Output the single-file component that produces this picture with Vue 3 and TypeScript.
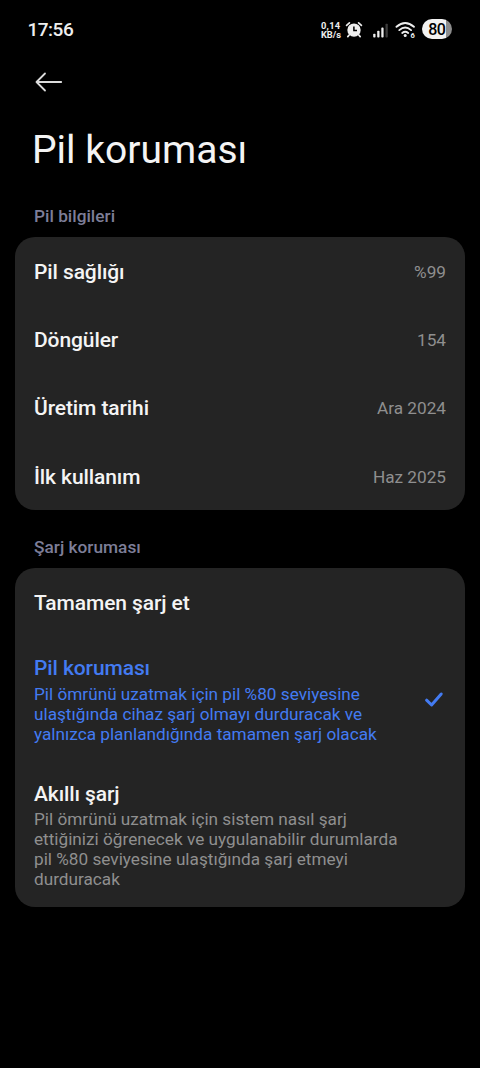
<script setup lang="ts">
interface InfoRow { label: string; value: string }
interface ChargeOption { title: string; lines: string[]; selected: boolean }

const info: InfoRow[] = [
  { label: 'Pil sağlığı', value: '%99' },
  { label: 'Döngüler', value: '154' },
  { label: 'Üretim tarihi', value: 'Ara 2024' },
  { label: 'İlk kullanım', value: 'Haz 2025' },
]

const options: ChargeOption[] = [
  { title: 'Tamamen şarj et', lines: [], selected: false },
  {
    title: 'Pil koruması',
    lines: [
      'Pil ömrünü uzatmak için pil %80 seviyesine',
      'ulaştığında cihaz şarj olmayı durduracak ve',
      'yalnızca planlandığında tamamen şarj olacak',
    ],
    selected: true,
  },
  {
    title: 'Akıllı şarj',
    lines: [
      'Pil ömrünü uzatmak için sistem nasıl şarj',
      'ettiğinizi öğrenecek ve uygulanabilir durumlarda',
      'pil %80 seviyesine ulaştığında şarj etmeyi',
      'durduracak',
    ],
    selected: false,
  },
]
</script>

<template>
  <div class="screen">
    <header class="status">
      <span class="clock">17:56</span>
      <div class="indicators">
        <div class="speed"><span class="rate">0,14</span><span>KB/s</span></div>
        <svg class="alarm" width="18" height="18" viewBox="0 0 18 18">
          <circle cx="9" cy="9.1" r="6.7" fill="#eee" />
          <path d="M1.6 4.4 4.4 1.9M16.4 4.4 13.6 1.9M4.2 14 2.8 15.6M13.8 14 15.2 15.6" stroke="#eee" stroke-width="1.7" stroke-linecap="round" />
          <path d="M8.9 5.6V9.6H12" fill="none" stroke="#000" stroke-width="1.5" />
        </svg>
        <svg class="signal" width="16" height="18" viewBox="0 0 16 18">
          <rect x="0.2" y="12.8" width="2.3" height="3.8" rx="0.8" fill="#eee" />
          <rect x="4.2" y="9.8" width="2.3" height="6.8" rx="0.8" fill="#eee" />
          <rect x="8.3" y="6.6" width="2.3" height="10" rx="0.8" fill="#eee" />
          <rect x="12.5" y="2.8" width="2.3" height="13.8" rx="0.8" fill="#3c3c3c" />
        </svg>
        <svg class="wifi" width="21" height="18" viewBox="0 0 21 18">
          <g fill="none" stroke="#eee" stroke-width="1.9" stroke-linecap="round">
            <path d="M1.5 5.8Q10.2 -1.8 18.9 5.8" />
            <path d="M4.3 9.1Q10.2 4 16.1 9.1" />
            <path d="M7.2 12Q10.2 9.6 13.2 12" />
          </g>
          <circle cx="10.2" cy="14.6" r="1.5" fill="#eee" />
          <text x="15.6" y="17" class="wifi-gen">6</text>
        </svg>
        <div class="battery"><span>80</span></div>
      </div>
    </header>

    <nav class="nav">
      <svg width="28" height="20" viewBox="0 0 28 20">
        <path d="M10 1.5 1.5 10 10 18.5M1.5 10H26.2" fill="none" stroke="#dcdcdc" stroke-width="1.8" stroke-linecap="round" stroke-linejoin="round" />
      </svg>
    </nav>

    <h1 class="title">Pil koruması</h1>

    <h2 class="section">Pil bilgileri</h2>
    <section class="card">
      <div v-for="row in info" :key="row.label" class="row">
        <span class="label">{{ row.label }}</span>
        <span class="value">{{ row.value }}</span>
      </div>
    </section>

    <h2 class="section second">Şarj koruması</h2>
    <section class="card">
      <div v-for="option in options" :key="option.title" class="option" :class="{ selected: option.selected }">
        <div class="copy">
          <div class="label">{{ option.title }}</div>
          <div v-if="option.lines.length" class="desc">
            <div v-for="line in option.lines" :key="line">{{ line }}</div>
          </div>
        </div>
        <svg v-if="option.selected" class="check" width="20" height="18" viewBox="0 0 20 18">
          <path d="M2.6 9.2 7.6 14 17.2 3" fill="none" stroke="#437bf2" stroke-width="3" stroke-linecap="round" stroke-linejoin="round" />
        </svg>
      </div>
    </section>
  </div>
</template>

<style>
body { margin: 0; background: #000; }
</style>

<style scoped>
.screen {
  box-sizing: border-box;
  width: 480px;
  height: 1068px;
  overflow: hidden;
  background: #000;
  color: #f4f4f4;
  font-family: Roboto, "Noto Sans", sans-serif;
}
.status {
  display: flex;
  justify-content: space-between;
  align-items: center;
  height: 60px;
  padding: 0 28.5px 0 27.5px;
}
.clock { margin-top: -2px; font-size: 19px; font-weight: 500; color: #eee; letter-spacing: -0.5px; }
.indicators { display: flex; align-items: center; }
.speed {
  display: flex;
  flex-direction: column;
  margin-top: -1px;
  font-size: 9.3px;
  line-height: 9px;
  font-weight: 700;
  color: #eee;
}
.rate { letter-spacing: 0.3px; }
.alarm { margin-left: 4px; }
.signal { margin-left: 9.5px; }
.wifi { margin-left: 6.5px; }
.wifi-gen { font-size: 7.5px; font-weight: 700; fill: #eee; }
.battery {
  display: flex;
  align-items: center;
  justify-content: center;
  width: 29.5px;
  height: 20px;
  margin: -2px 0 0 6px;
  border-radius: 10px;
  background: linear-gradient(90deg, #f2f2f2 80%, #8c8c8c 80%);
  color: #000;
  font-size: 16px;
  font-weight: 500;
  letter-spacing: -0.5px;
}
.nav { display: flex; height: 44px; align-items: center; padding-left: 35px; }
.title {
  margin: 23px 0 0 32px;
  font-size: 39px;
  line-height: 46px;
  font-weight: 400;
}
.section {
  margin: 33px 0 0 34px;
  font-size: 17.3px;
  line-height: 20px;
  font-weight: 500;
  color: #7d7e98;
}
.section.second { margin-top: 27px; }
.card {
  margin: 11px 15px 0;
  border-radius: 20px;
  background: #242424;
}
.row {
  box-sizing: border-box;
  display: flex;
  align-items: center;
  justify-content: space-between;
  height: 68.33px;
  padding: 0.9px 19px 0;
}
.label { font-size: 21px; line-height: 24px; font-weight: 500; letter-spacing: -0.1px; }
.value { font-size: 17.2px; color: #8f8f8f; }
.option {
  display: flex;
  align-items: center;
  justify-content: space-between;
  padding: 20px 21.5px 18px 19px;
}
.option:first-child { padding: 22.5px 22px 21.5px 19px; }
.option:last-child { padding-bottom: 18px; }
.desc {
  margin-top: 4px;
  font-size: 17.2px;
  line-height: 20px;
  color: #8f8f8f;
  white-space: nowrap;
}
.option:last-child .desc { margin-top: 3px; }
.selected .label, .selected .desc { color: #437bf2; }
</style>
